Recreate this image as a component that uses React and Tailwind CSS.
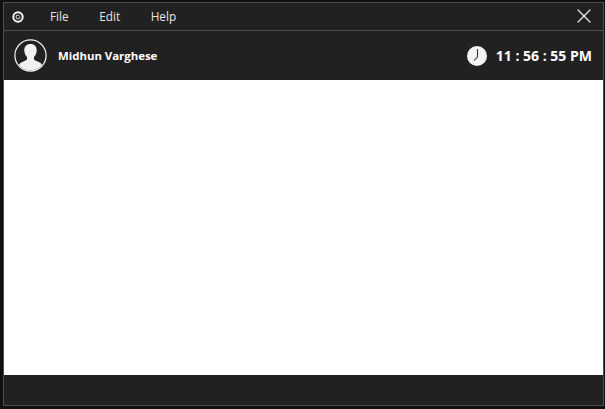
import { X } from 'lucide-react'

function AppLogo() {
  return (
    <svg width="14" height="14" viewBox="0 0 14 14">
      <circle cx="7" cy="7" r="4.7" fill="none" stroke="#f4f4f4" strokeWidth="2" />
      <circle cx="7" cy="7" r="2.3" fill="#2a2a2a" />
      <circle cx="7" cy="7" r="1.9" fill="none" stroke="#c4c4c4" strokeWidth="1.1" />
      <circle cx="8" cy="6" r="0.8" fill="#222" />
    </svg>
  )
}

function UserAvatar() {
  return (
    <svg width="33" height="33" viewBox="0 0 33 33">
      <defs>
        <clipPath id="avatar-clip">
          <circle cx="16.5" cy="16.5" r="15" />
        </clipPath>
      </defs>
      <circle cx="16.5" cy="16.5" r="15.6" fill="none" stroke="#f2f2f2" strokeWidth="1.2" />
      <g clipPath="url(#avatar-clip)" fill="#f2f2f2">
        <path d="M16.5 5c-4 0-6.2 2.6-6.2 6.2 0 2.8 1.1 5.2 2.7 6.8v2c0 1-1.2 1.6-3.6 2.4-2.4.9-4.2 1.9-4.6 4.2L4.5 33h24l-.3-6.4c-.4-2.3-2.2-3.3-4.6-4.2-2.4-.8-3.6-1.4-3.6-2.4v-2c1.6-1.6 2.7-4 2.7-6.8 0-3.6-2.2-6.2-6.2-6.2z" />
      </g>
    </svg>
  )
}

function ClockIcon() {
  return (
    <svg width="20" height="20" viewBox="0 0 20 20">
      <circle cx="10" cy="10" r="10" fill="#f4f4f4" />
      <path d="M10.5 3V11" stroke="#333" strokeWidth="1.1" fill="none" />
      <path d="M10.5 11L7 14.5" stroke="#666" strokeWidth="1.2" fill="none" />
    </svg>
  )
}

export default function App() {
  return (
    <div className="w-[605px] h-[409px] overflow-hidden bg-[#101010] pt-[2px] pl-[3px] pr-[1px] pb-[3px] font-['Open_Sans','Noto_Sans',sans-serif]">
      <div className="h-full flex flex-col border border-[#4d4d4d] bg-[#212121]">
        {/* Menu bar */}
        <div className="h-[27px] shrink-0 flex items-center">
          <div className="ml-[7px] flex items-center"><AppLogo /></div>
          <div className="flex items-center ml-[25px] gap-[30.5px] text-[11.8px] text-[#e6e6e6]">
            <span>File</span>
            <span>Edit</span>
            <span>Help</span>
          </div>
          <button className="ml-auto mr-[7px] mb-[2px] text-[#f0f0f0]">
            <X size={24} strokeWidth={1.2} />
          </button>
        </div>
        <div className="h-px shrink-0 bg-[#4d4d4d]" />

        {/* User header */}
        <div className="h-[49px] shrink-0 flex items-center pl-[10px] pr-[11px]">
          <UserAvatar />
          <span className="ml-[11px] text-[11.4px] font-bold text-white">Midhun Varghese</span>
          <div className="ml-auto flex items-center">
            <ClockIcon />
            <span className="ml-[9px] text-[14px] font-bold text-white whitespace-pre">11 : 56 : 55 PM</span>
          </div>
        </div>

        <div className="flex-1 bg-white" />

        <div className="h-[30px] shrink-0 bg-[#212121]" />
      </div>
    </div>
  )
}
